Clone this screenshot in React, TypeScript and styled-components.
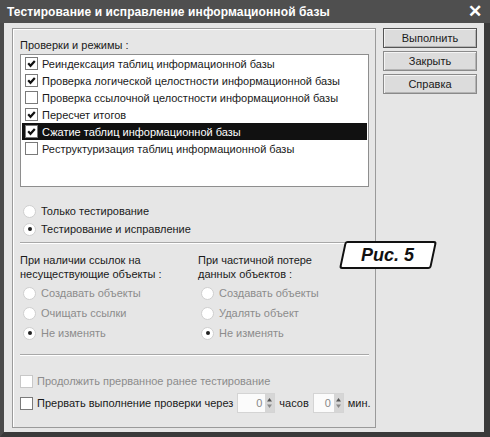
import React from "react";
import styled, { createGlobalStyle } from "styled-components";

const Global = createGlobalStyle`
  html, body { margin: 0; padding: 0; background: #e4e4e4; }
  body { font-family: "Liberation Sans", Arial, sans-serif; }
`;

const Window = styled.div`
  width: 490px;
  height: 437px;
  box-sizing: border-box;
  display: flex;
  flex-direction: column;
  background: #e6e6e6;
  border-left: 4px solid #4a4a4a;
  border-right: 6px solid #3a3a3a;
  border-bottom: 5px solid #3a3a3a;
  position: relative;
  color: #1a1a1a;
  font-size: 11px;
`;

const TitleBar = styled.div`
  height: 23px;
  margin-left: -4px;
  margin-right: -6px;
  background: #4f4f4f;
  display: flex;
  align-items: center;
  justify-content: space-between;
  padding: 0 8px 0 7px;
  color: #ffffff;
  font-weight: bold;
  font-size: 12px;
  letter-spacing: 0.1px;
`;

const CloseX = styled.span`
  font-size: 17px;
  font-weight: bold;
  line-height: 1;
`;

const Body = styled.div`
  flex: 1;
  display: flex;
  padding: 5px 4px 4px 8px;
  gap: 7px;
`;

const GroupBox = styled.div`
  width: 364px;
  box-sizing: border-box;
  border: 1px solid #9a9a9a;
  box-shadow: inset 1px 1px 0 #ffffff;
  padding: 8px 6px 0 7px;
  display: flex;
  flex-direction: column;
`;

const Caption = styled.div`
  height: 17px;
  line-height: 16px;
`;

const List = styled.div`
  background: #ffffff;
  border: 1px solid #8e8e8e;
  height: 133px;
  box-sizing: border-box;
  padding: 0 1px;
`;

const ListRow = styled.div<{ $sel?: boolean }>`
  height: 17px;
  display: flex;
  align-items: center;
  gap: 4px;
  padding-left: 3px;
  background: ${(p) => (p.$sel ? "#111111" : "transparent")};
  color: ${(p) => (p.$sel ? "#ffffff" : "#1a1a1a")};
  white-space: nowrap;
`;

const Box = styled.span<{ $disabled?: boolean }>`
  width: 11px;
  height: 11px;
  flex: none;
  border: 1px solid ${(p) => (p.$disabled ? "#c8c8c8" : "#7a7a7a")};
  background: #ffffff;
  display: inline-flex;
  align-items: center;
  justify-content: center;
`;

const Check = () => (
  <svg width="9" height="9" viewBox="0 0 9 9">
    <path d="M1.2 4.3 L3.5 6.8 L7.8 2" stroke="#111" strokeWidth="2.2" fill="none" />
  </svg>
);

const RadioGroup = styled.div`
  padding: 15px 0 0 3px;
  display: flex;
  flex-direction: column;
`;

const RadioRow = styled.div<{ $h?: number; $disabled?: boolean }>`
  height: ${(p) => p.$h ?? 18}px;
  display: flex;
  align-items: center;
  gap: 5px;
  color: ${(p) => (p.$disabled ? "#8c8c8c" : "#1a1a1a")};
  white-space: nowrap;
`;

const Circle = styled.span<{ $on?: boolean }>`
  width: 11px;
  height: 11px;
  flex: none;
  border-radius: 50%;
  background: #ffffff;
  border: 1px solid #cfcfcf;
  display: inline-flex;
  align-items: center;
  justify-content: center;
  &::after {
    content: "";
    width: 4px;
    height: 4px;
    border-radius: 50%;
    background: ${(p) => (p.$on ? "#222" : "transparent")};
  }
`;

const Separator = styled.div<{ $mt: number }>`
  height: 0;
  border-top: 1px solid #a8a8a8;
  border-bottom: 1px solid #ffffff;
  margin-top: ${(p) => p.$mt}px;
`;

const Columns = styled.div`
  display: grid;
  grid-template-columns: 178px 1fr;
  padding-top: 9px;
`;

const Column = styled.div`
  display: flex;
  flex-direction: column;
`;

const ColTitle = styled.div`
  line-height: 14px;
  margin-bottom: 2px;
`;

const DisRadio = styled(RadioRow)`
  padding-left: 3px;
  height: 20px;
`;

const Bottom = styled.div`
  display: flex;
  flex-direction: column;
  padding: 14px 0 0 0;
`;

const CheckRow = styled.div<{ $disabled?: boolean }>`
  height: 22px;
  display: flex;
  align-items: center;
  gap: 4px;
  color: ${(p) => (p.$disabled ? "#8c8c8c" : "#1a1a1a")};
  white-space: nowrap;
`;

const Spin = styled.div`
  display: flex;
  height: 18px;
  border: 1px solid #d4d4d4;
`;

const SpinField = styled.div<{ $w: number }>`
  width: ${(p) => p.$w}px;
  background: #fbfbfb;
  text-align: right;
  padding-right: 3px;
  box-sizing: border-box;
  line-height: 18px;
  color: #888;
`;

const SpinArrows = styled.div`
  width: 9px;
  background: #d6d6d6;
  display: flex;
  align-items: center;
  justify-content: center;
`;

const Arrows = () => (
  <svg width="7" height="14" viewBox="0 0 7 14">
    <path d="M1 5.5 L3.5 2 L6 5.5 Z" fill="#555" />
    <path d="M1 8.5 L3.5 12 L6 8.5 Z" fill="#888" />
  </svg>
);

const ButtonCol = styled.div`
  display: flex;
  flex-direction: column;
  gap: 3px;
  width: 94px;
`;

const Button = styled.div<{ $def?: boolean }>`
  height: 20px;
  box-sizing: border-box;
  display: flex;
  align-items: center;
  justify-content: center;
  background: #dcdcdc;
  border: 1px solid ${(p) => (p.$def ? "#555" : "#8a8a8a")};
  box-shadow: inset 1px 1px 0 #f4f4f4, inset -1px -1px 0 #b4b4b4;
`;

const Badge = styled.div`
  position: absolute;
  left: 338px;
  top: 241px;
  width: 88px;
  height: 24px;
  background: #ffffff;
  border: 2px solid #111;
  border-radius: 3px;
  transform: skewX(-12deg);
  display: flex;
  align-items: center;
  justify-content: center;
`;

const BadgeText = styled.span`
  transform: skewX(12deg);
  font-family: "Liberation Sans", Arial, sans-serif;
  font-weight: bold;
  font-style: italic;
  font-size: 18px;
  color: #111;
`;

const items = [
  { t: "Реиндексация таблиц информационной базы", c: true },
  { t: "Проверка логической целостности информационной базы", c: true },
  { t: "Проверка ссылочной целостности информационной базы", c: false },
  { t: "Пересчет итогов", c: true },
  { t: "Сжатие таблиц информационной базы", c: true, s: true },
  { t: "Реструктуризация таблиц информационной базы", c: false },
];

export default function App() {
  return (
    <>
      <Global />
      <Window>
        <TitleBar>
          <span>Тестирование и исправление информационной базы</span>
          <CloseX>✕</CloseX>
        </TitleBar>
        <Body>
          <GroupBox>
            <Caption>Проверки и режимы :</Caption>
            <List>
              {items.map((it) => (
                <ListRow key={it.t} $sel={it.s}>
                  <Box>{it.c && <Check />}</Box>
                  <span>{it.t}</span>
                </ListRow>
              ))}
            </List>
            <RadioGroup>
              <RadioRow>
                <Circle />
                <span>Только тестирование</span>
              </RadioRow>
              <RadioRow>
                <Circle $on />
                <span>Тестирование и исправление</span>
              </RadioRow>
            </RadioGroup>
            <Separator $mt={4} />
            <Columns>
              <Column>
                <ColTitle>
                  При наличии ссылок на
                  <br />
                  несуществующие объекты :
                </ColTitle>
                <DisRadio $disabled>
                  <Circle />
                  <span>Создавать объекты</span>
                </DisRadio>
                <DisRadio $disabled>
                  <Circle />
                  <span>Очищать ссылки</span>
                </DisRadio>
                <DisRadio $disabled>
                  <Circle $on />
                  <span>Не изменять</span>
                </DisRadio>
              </Column>
              <Column>
                <ColTitle>
                  При частичной потере
                  <br />
                  данных объектов :
                </ColTitle>
                <DisRadio $disabled>
                  <Circle />
                  <span>Создавать объекты</span>
                </DisRadio>
                <DisRadio $disabled>
                  <Circle />
                  <span>Удалять объект</span>
                </DisRadio>
                <DisRadio $disabled>
                  <Circle $on />
                  <span>Не изменять</span>
                </DisRadio>
              </Column>
            </Columns>
            <Separator $mt={11} />
            <Bottom>
              <CheckRow $disabled>
                <Box $disabled />
                <span>Продолжить прерванное ранее тестирование</span>
              </CheckRow>
              <CheckRow>
                <Box />
                <span>Прервать выполнение проверки через</span>
                <Spin>
                  <SpinField $w={27}>0</SpinField>
                  <SpinArrows>
                    <Arrows />
                  </SpinArrows>
                </Spin>
                <span>часов</span>
                <Spin>
                  <SpinField $w={20}>0</SpinField>
                  <SpinArrows>
                    <Arrows />
                  </SpinArrows>
                </Spin>
                <span>мин.</span>
              </CheckRow>
            </Bottom>
          </GroupBox>
          <ButtonCol>
            <Button $def>Выполнить</Button>
            <Button>Закрыть</Button>
            <Button>Справка</Button>
          </ButtonCol>
        </Body>
        <Badge>
          <BadgeText>Рис. 5</BadgeText>
        </Badge>
      </Window>
    </>
  );
}
